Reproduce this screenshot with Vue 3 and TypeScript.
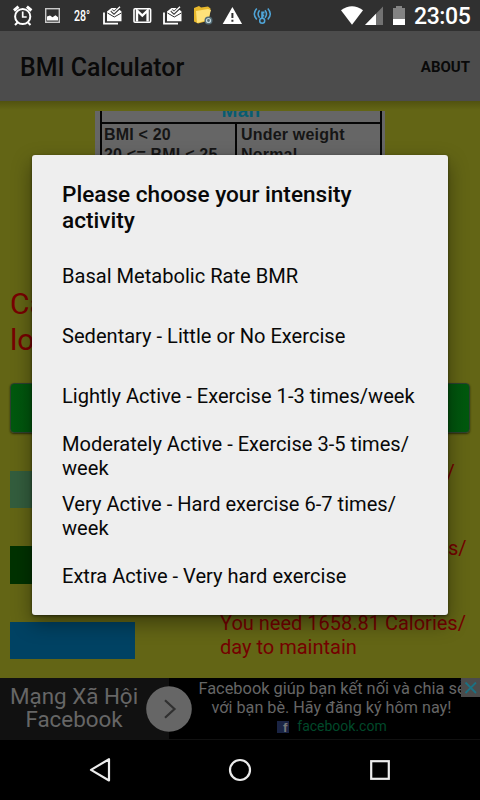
<script setup lang="ts">
const activities: string[] = [
  'Basal Metabolic Rate BMR',
  'Sedentary - Little or No Exercise',
  'Lightly Active - Exercise 1-3 times/week',
  'Moderately Active - Exercise 3-5 times/\nweek',
  'Very Active - Hard exercise 6-7 times/\nweek',
  'Extra Active - Very hard exercise',
]

interface Result {
  tone: string
  text: string
}

const results: Result[] = [
  { tone: 'teal', text: '/' },
  { tone: 'green', text: 's/' },
  { tone: 'blue', text: 'You need 1658.81 Calories/\nday to maintain' },
]
</script>

<template>
  <div class="screen">
    <header class="status">
      <svg class="status-icons" width="280" height="31" viewBox="0 0 280 31">
        <g fill="none" stroke="#fff" stroke-width="2">
          <circle cx="22.700" cy="16.500" r="7.600" />
          <path d="M22.700 11.500v5.500h4" stroke-width="1.700" />
          <path d="M14 10.500l4.500-3.800M31.400 10.500l-4.500-3.800" stroke-width="3" />
          <path d="M17.500 22.500l-2.500 2.500M28 22.500l2.500 2.500" />
        </g>
        <rect x="45.700" y="8.700" width="13.600" height="13.600" fill="none" stroke="#c9c9c9" stroke-width="1.400" />
        <path d="M47 20.500v-4l3-1 2.500 1.700 3-2 2.500 2v3.300z" fill="#fff" />
        <g v-for="x in [0, 60]" :key="x" :transform="`translate(${x} 0)`">
          <path d="M104 12.500v11.200h14" fill="none" stroke="#fff" stroke-width="1.800" />
          <path d="M107 11.500l4.500-3.500h6l4 3.500v9.700h-14.500z" fill="#fff" />
          <path d="M107.500 13l6.800 4 7-4" fill="none" stroke="#303030" stroke-width="1" />
          <path d="M111.500 10.300l2.500 2.500 6-5.800" fill="none" stroke="#303030" stroke-width="3.200" />
          <path d="M111.500 10.200l2.500 2.300 6-5.700" fill="none" stroke="#fff" stroke-width="1.400" />
        </g>
        <rect x="134" y="8.700" width="16.600" height="13.600" rx="1" fill="none" stroke="#fff" stroke-width="1.600" />
        <path d="M137 21.500v-11l5.300 5 5.300-5v11" fill="none" stroke="#fff" stroke-width="2.400" />
        <path d="M194 8l5-2 2 1.500 7-1 2.500 2-1.500 12-11 3-4-2z" fill="#e7b72b" />
        <path d="M196 11l12-2 3 1-3 10-11 3z" fill="#ffe27a" />
        <circle cx="208.500" cy="20.500" r="4" fill="#536b75" />
        <circle cx="208.500" cy="20.500" r="2" fill="none" stroke="#c2d8df" stroke-width="1.200" />
        <path d="M232.400 7l9.700 17h-19.400z" fill="#fff" />
        <path d="M232.400 13v5M232.400 19.800v2" stroke="#303030" stroke-width="2" />
        <g fill="none" stroke="#4fa5d8" stroke-width="1.500">
          <path d="M256.800 8.500q-5 5.500 0 11M259.600 10.200q-3 3.800 0 7.600M267.800 8.500q5 5.500 0 11M265 10.200q3 3.800 0 7.600" />
          <circle cx="262.200" cy="20.700" r="2.500" />
          <path d="M262.200 18v-5.500h2.300M262.200 15.500h2" stroke-width="2" />
        </g>
      </svg>
      <span class="temp">28°</span>
      <svg class="signals" width="70" height="31" viewBox="0 0 70 31">
        <path d="M1 10.200Q12 2.500 23 10.200L12 24.700z" fill="#fff" />
        <path d="M43 6.500V25H25z" fill="#727272" />
        <path d="M36 13.800V25H25z" fill="#fff" />
        <path d="M53 8h3V6h6v2h3v17H53z" fill="#838383" />
        <path d="M53 19h12v6H53z" fill="#fff" />
      </svg>
      <time class="clock">23:05</time>
    </header>

    <div class="appbar">
      <h1>BMI Calculator</h1>
      <span class="about">ABOUT</span>
    </div>

    <main class="page">
      <div class="chart">
        <div class="grid">
          <div class="head"><span>Man</span></div>
          <div class="cells">
            <div>BMI &lt; 20<br />20 &lt;= BMI &lt; 25</div>
            <div>Under weight<br />Normal</div>
          </div>
        </div>
      </div>
      <p class="summary">Ca<br />lo</p>
      <div class="button"></div>
      <div class="results">
        <div v-for="r in results" :key="r.tone" class="result" :class="r.tone">
          <div class="bar"></div>
          <p>{{ r.text }}</p>
        </div>
      </div>
    </main>

    <aside class="ad">
      <div class="brand">Mạng Xã Hội<br />Facebook</div>
      <div class="copy">
        <p class="line-a">Facebook giúp bạn kết nối và chia sẻ</p>
        <p class="line-b">với bạn bè. Hãy đăng ký hôm nay!</p>
        <p class="link"><span class="fb">f</span>facebook.com</p>
      </div>
      <svg class="go" width="46" height="46" viewBox="0 0 46 46">
        <circle cx="23" cy="23" r="22.800" fill="#666" />
        <path d="M19 14.300l9.500 8.700-9.500 8.700" fill="none" stroke="#303030" stroke-width="2.200" />
      </svg>
      <svg class="close" width="19" height="19" viewBox="0 0 19 19">
        <path d="M0 0h19v19H0z" fill="#4b4b4b" />
        <path d="M4.500 4.500l10.500 10.500M15 4.500L4.500 15" stroke="#1b7183" stroke-width="1.800" />
      </svg>
    </aside>

    <nav class="nav">
      <svg width="480" height="60" viewBox="0 0 480 60" fill="none" stroke="#ececec" stroke-width="2.200">
        <path d="M109 19.200v21.300L91 29.900z" stroke-linejoin="round" />
        <circle cx="240" cy="30" r="10" />
        <rect x="371.200" y="21.200" width="17.600" height="17.600" />
      </svg>
    </nav>

    <section class="dialog">
      <h2>Please choose your intensity<br />activity</h2>
      <ul>
        <li v-for="a in activities" :key="a">{{ a }}</li>
      </ul>
    </section>
  </div>
</template>

<style>
body {
  margin: 0;
  background: #000;
}
</style>

<style scoped>
.screen {
  position: relative;
  display: flex;
  flex-direction: column;
  width: 480px;
  height: 800px;
  overflow: hidden;
  font-family: Roboto, sans-serif;
  background: #000;
}
h1, h2, p, ul {
  margin: 0;
  padding: 0;
}
.status {
  position: relative;
  display: flex;
  flex: none;
  height: 31px;
  background: #303030;
  color: #fff;
}
.temp {
  position: absolute;
  left: 74px;
  top: 6px;
  font-size: 15px;
  line-height: 20px;
  font-weight: 500;
  transform: scaleX(0.71);
  transform-origin: left;
}
.signals {
  margin-left: 60px;
}
.clock {
  margin-left: 4px;
  font-size: 23px;
  line-height: 34px;
  font-weight: 500;
  letter-spacing: -0.4px;
}
.appbar {
  display: flex;
  flex: none;
  align-items: center;
  justify-content: space-between;
  height: 70px;
  padding: 0 10px 0 20px;
  background: #4c4c4c;
  color: #090909;
}
.appbar h1 {
  padding-top: 4px;
  font-size: 24.9px;
  line-height: 30px;
  font-weight: 500;
}
.about {
  padding-top: 1px;
  font-size: 15px;
  font-weight: 700;
}
.page {
  display: flex;
  flex: none;
  flex-direction: column;
  height: 577px;
  box-sizing: border-box;
  padding: 10px 10px 0;
  overflow: hidden;
  background: linear-gradient(#515210, #636515 9px);
}
.chart {
  flex: none;
  width: 282px;
  height: 164px;
  margin-left: 85px;
  padding: 0 3px 0 5px;
  overflow: hidden;
  background: #666;
  color: #151515;
  font: 700 16px/20px "Liberation Sans", sans-serif;
  letter-spacing: 0.2px;
}
.grid {
  height: 164px;
  box-sizing: border-box;
  border: solid #050505;
  border-width: 0 2px;
}
.head {
  display: flex;
  align-items: flex-end;
  justify-content: center;
  height: 11px;
  border-bottom: 2px solid #050505;
  overflow: hidden;
  color: #075c70;
}
.head span {
  margin-bottom: 1px;
  font-size: 19px;
  letter-spacing: 0.3px;
}
.cells {
  display: grid;
  grid-template-columns: 133px 1fr;
  height: 151px;
}
.cells div {
  padding: 1px 2px;
}
.cells div + div {
  border-left: 2px solid #050505;
  padding-left: 4px;
}
.summary {
  flex: none;
  height: 72px;
  margin-top: 11px;
  color: #780000;
  font-size: 30px;
  line-height: 36px;
}
.button {
  flex: none;
  height: 48px;
  margin-top: 25px;
  border: 1px solid #2d4030;
  border-radius: 4px;
  background: linear-gradient(90deg, #00590e, #003f09 25%, #003f09 75%, #00590e);
  box-shadow: 0 1px 2px #2a2b08;
  box-sizing: content-box;
}
.results {
  display: flex;
  flex-direction: column;
  gap: 27.5px;
  margin-top: 27px;
}
.result {
  display: flex;
  align-items: flex-end;
  height: 48px;
}
.bar {
  width: 125px;
  height: 37.3px;
}
.teal .bar {
  background: #335d3d;
}
.green .bar {
  background: #003200;
}
.blue .bar {
  background: #004263;
}
.result p {
  align-self: flex-start;
  margin-left: 85px;
  color: #740000;
  font-size: 20px;
  line-height: 24px;
  white-space: pre;
}
.teal p {
  margin-left: 311.5px;
}
.green p {
  margin-left: 313px;
}
.ad {
  position: relative;
  display: flex;
  flex: none;
  height: 62px;
  box-sizing: border-box;
  border-bottom: 1px solid #111;
  background: #000;
}
.brand {
  width: 169px;
  box-sizing: border-box;
  padding: 7px 21px 0 0;
  background: #111;
  color: #666;
  font-size: 22.4px;
  line-height: 23px;
  text-align: center;
}
.copy {
  width: 311px;
  box-sizing: border-box;
  padding-top: 1px;
  color: #666;
  text-align: center;
}
.copy p {
  line-height: 19px;
  white-space: nowrap;
  font-size: 16.2px;
}
.copy .line-a {
  padding-left: 15px;
  font-size: 16.4px;
}
.line-b {
  padding-left: 14px;
}
.copy .link {
  display: flex;
  align-items: center;
  justify-content: center;
  gap: 8px;
  color: #00492a;
  font-size: 14px;
  padding-left: 15px;
}
.fb {
  width: 12px;
  height: 12px;
  box-sizing: border-box;
  padding-left: 4px;
  background: #1a2444;
  color: #777;
  font: 700 13px/14px "Liberation Sans", sans-serif;
}
.go {
  position: absolute;
  left: 146px;
  top: 8px;
}
.close {
  position: absolute;
  right: 0;
  top: 0;
}
.nav {
  flex: none;
  height: 60px;
  background: #000;
}
.dialog {
  position: absolute;
  left: 32px;
  top: 155px;
  width: 416px;
  height: 460px;
  box-sizing: border-box;
  padding: 27px 30px 9px;
  border-radius: 3px;
  background: #eee;
  color: #080808;
  box-shadow: 0 8px 20px rgba(0, 0, 0, 0.4), 0 1px 3px rgba(0, 0, 0, 0.5);
}
.dialog h2 {
  height: 63.5px;
  font-size: 22.6px;
  line-height: 26px;
  font-weight: 500;
  white-space: nowrap;
}
.dialog ul {
  list-style: none;
}
.dialog li {
  display: flex;
  align-items: center;
  height: 60px;
  font-size: 20.08px;
  line-height: 24px;
  white-space: pre;
}
</style>
